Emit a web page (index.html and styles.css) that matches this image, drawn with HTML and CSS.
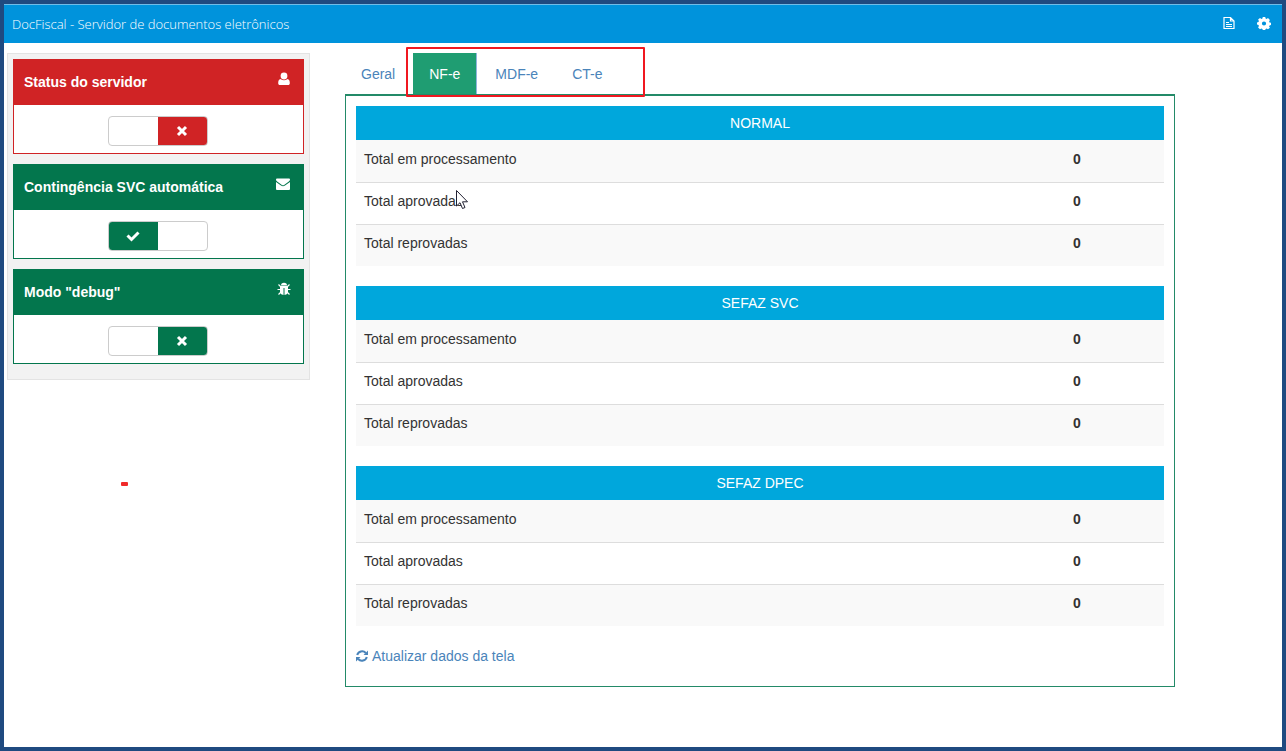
FILE: index.html
```html
<!DOCTYPE html>
<html lang="pt-BR">
<head>
<meta charset="utf-8">
<meta name="viewport" content="width=device-width, initial-scale=1">
<title>DocFiscal</title>
<link rel="stylesheet" href="styles.css">
</head>
<body>
<div class="window">
  <header class="topbar">
    <h1 class="brand">DocFiscal - Servidor de documentos eletrônicos</h1>
    <div class="actions">
      <button class="icon-button" type="button" aria-label="Documentos">
        <svg width="12" height="14" viewBox="0 0 12 14" fill="none" stroke="currentColor" stroke-width="1.200"><path d="M1 1.500h6.500l3.500 3.500v7.500H1zM7.500 1.500v3.500h3.500M3 6.500h3M3 8.500h6M3 10.500h6"/></svg>
      </button>
      <button class="icon-button" type="button" aria-label="Configurações">
        <svg width="14" height="14" viewBox="0 0 14 14"><path fill="currentColor" fill-rule="evenodd" d="M5.800 1h2.400l.4 1.500 1 .4L11 2.100l1.900 1.900-.8 1.400.4 1 1.500.4v2.200l-1.500.4-.4 1 .8 1.400L11 13.300l-1.400-.8-1 .4-.4 1.100H5.800l-.4-1.100-1-.4-1.400.8-1.900-1.900.8-1.400-.4-1L0 8.600V6.400L1.500 6l.4-1-.8-1.400L3 2.100l1.400.8 1-.4zM7 5.400a2.100 2.100 0 1 0 0 4.200 2.100 2.100 0 0 0 0-4.200z"/></svg>
      </button>
    </div>
  </header>

  <div class="layout">
    <aside class="sidebar">
      <section class="card card-danger">
        <div class="card-head">
          <h2 class="card-title" id="t1">Status do servidor</h2>
          <svg width="14" height="14" viewBox="0 0 14 14" fill="currentColor"><circle cx="7" cy="4" r="3.400"/><path d="M3.500 7q3.500 2.500 7 0c1.600.4 2.300 1.800 2.300 4 0 1.400-.6 2-1.800 2H3c-1.200 0-1.800-.6-1.800-2 0-2.200.7-3.600 2.300-4z"/></svg>
        </div>
        <div class="card-body">
          <span class="switch"><input type="checkbox" class="switch-input" aria-labelledby="t1"><svg class="mark mark-off" width="12" height="12" viewBox="0 0 12 12"><path d="M2 2l8 8M10 2l-8 8"/></svg></span>
        </div>
      </section>
      <section class="card card-ok">
        <div class="card-head">
          <h2 class="card-title" id="t2">Contingência SVC automática</h2>
          <svg width="16" height="14" viewBox="0 0 16 14" fill="currentColor"><path d="M2 1.500h12q1 0 1 1c0 1-.7 1.700-1.500 2.300L9.400 7.700Q8 8.700 6.600 7.700L2.500 4.800C1.700 4.200 1 3.500 1 2.500q0-1 1-1zM1 5l5 3.600q2 1.500 4 0L15 5v7q0 1-1 1H2q-1 0-1-1z"/></svg>
        </div>
        <div class="card-body">
          <span class="switch"><input type="checkbox" class="switch-input" aria-labelledby="t2" checked><svg class="mark mark-on" width="14" height="12" viewBox="0 0 14 12"><path d="M1.500 5.500l4 4 7-7"/></svg></span>
        </div>
      </section>
      <section class="card card-ok">
        <div class="card-head">
          <h2 class="card-title" id="t3">Modo "debug"</h2>
          <svg width="14" height="14" viewBox="0 0 14 14"><path fill="currentColor" d="M4 3.500a3 2.800 0 0 1 6 0zM3 4h8v5.500q0 3-3.500 3.500V6h-1v7Q3 12.500 3 9.500z"/><path stroke="currentColor" stroke-width="1.200" fill="none" d="M1.500 2.500l2.500 2.500M12.500 2.500L10 5M.500 7.500H4M10 7.500h3.500M1.500 12.500L4 10M12.500 12.500L10 10"/></svg>
        </div>
        <div class="card-body">
          <span class="switch"><input type="checkbox" class="switch-input" aria-labelledby="t3"><svg class="mark mark-off" width="12" height="12" viewBox="0 0 12 12"><path d="M2 2l8 8M10 2l-8 8"/></svg></span>
        </div>
      </section>
    </aside>

    <main class="content">
      <nav class="tabs">
        <a class="tab" href="#geral">Geral</a>
        <a class="tab tab-active" href="#nfe">NF-e</a>
        <a class="tab" href="#mdfe">MDF-e</a>
        <a class="tab" href="#cte">CT-e</a>
        <span class="highlight"></span>
      </nav>
      <div class="panel">
        <table class="totals">
          <thead><tr><th colspan="2">NORMAL</th></tr></thead>
          <tbody>
            <tr><td>Total em processamento</td><td class="value">0</td></tr>
            <tr><td><span class="pointed">Total aprovadas<svg class="cursor" width="14" height="21" viewBox="0 0 14 21"><path d="M1.500 1.500v15.500l3.500-3.300 2.500 5.800 2.500-1-2.500-5.700h5z" fill="#fff" stroke="#223"/></svg></span></td><td class="value">0</td></tr>
            <tr><td>Total reprovadas</td><td class="value">0</td></tr>
          </tbody>
        </table>
        <table class="totals">
          <thead><tr><th colspan="2">SEFAZ SVC</th></tr></thead>
          <tbody>
            <tr><td>Total em processamento</td><td class="value">0</td></tr>
            <tr><td>Total aprovadas</td><td class="value">0</td></tr>
            <tr><td>Total reprovadas</td><td class="value">0</td></tr>
          </tbody>
        </table>
        <table class="totals">
          <thead><tr><th colspan="2">SEFAZ DPEC</th></tr></thead>
          <tbody>
            <tr><td>Total em processamento</td><td class="value">0</td></tr>
            <tr><td>Total aprovadas</td><td class="value">0</td></tr>
            <tr><td>Total reprovadas</td><td class="value">0</td></tr>
          </tbody>
        </table>
        <a class="refresh" href="#atualizar">
          <svg width="12" height="12" viewBox="0 0 12 12"><path d="M1.200 5A5 5 0 0 1 9.800 3M10.800 7A5 5 0 0 1 2.200 9" fill="none" stroke="currentColor" stroke-width="2"/><path fill="currentColor" d="M12 .5V5H7.500zM0 11.500V7h4.500z"/></svg>
          Atualizar dados da tela
        </a>
      </div>
    </main>
  </div>
  <span class="dash"></span>
</div>
</body>
</html>
```
FILE: styles.css
```css
* { box-sizing: border-box; }

body {
  margin: 0;
  font: 14px/20px "Liberation Sans", Arial, sans-serif;
  color: #333;
  background: #fff;
}

.window {
  position: relative;
  min-height: 100vh;
  border: 4px solid #1f4a80;
}

.topbar {
  display: flex;
  align-items: center;
  justify-content: space-between;
  height: 39px;
  padding: 0 11px 3px 8px;
  border-top: 1px solid #6fbce8;
  background: #0093dc;
  color: #fff;
}

.brand {
  margin: 0;
  padding-top: 3px;
  font: 300 13px/20px "Open Sans", sans-serif;
}

.actions { display: flex; gap: 22px; }

.icon-button {
  display: flex;
  padding: 0;
  border: 0;
  background: none;
  color: #fff;
}

.layout {
  display: grid;
  grid-template-columns: 303px minmax(0, 1fr);
  gap: 35px;
  align-items: start;
  padding: 10px 107px 0 3px;
}

.sidebar {
  display: grid;
  gap: 10px;
  padding: 5px 5px 15px;
  border: 1px solid #e3e3e3;
  background: #f2f2f2;
}

.card { border: 1px solid var(--tone); background: #fff; }
.card-danger { --tone: #d02325; }
.card-ok { --tone: #03764d; }

.card-head {
  display: flex;
  justify-content: space-between;
  padding: 12px 12px 13px 10px;
  background: var(--tone);
  color: #fff;
}

.card-title { margin: 0; font-size: 14px; line-height: 20px; }

.card-body {
  display: flex;
  justify-content: center;
  padding: 11px 2px 7px 0;
}

.switch {
  position: relative;
  display: flex;
}

.switch-input {
  appearance: none;
  width: 100px;
  height: 30px;
  margin: 0;
  border: 1px solid #ccc;
  border-radius: 4px;
  background: linear-gradient(90deg, #fff 50%, var(--tone) 50%);
}

.switch-input:checked {
  background: linear-gradient(90deg, var(--tone) 50%, #fff 50%);
}

.mark {
  position: absolute;
  top: 9px;
  fill: none;
  stroke: #fff;
  stroke-width: 3;
  pointer-events: none;
}

.mark-off { right: 20px; }
.mark-on { left: 18px; }

.tabs {
  position: relative;
  display: flex;
  gap: 2px;
}

.tab {
  padding: 11px 16px 10px;
  color: #4a84ba;
  text-decoration: none;
}

.tab-active {
  border-right: 1px solid #8fb4dc;
  background: #1f9d72;
  color: #fff;
}

.highlight {
  position: absolute;
  top: -6px;
  left: 61px;
  width: 239px;
  height: 50px;
  border: 2px solid #f01820;
  border-radius: 1px;
  pointer-events: none;
}

.panel {
  padding: 10px 10px 19px;
  border: 1px solid #238a68;
  border-top-width: 2px;
}

.totals {
  width: 100%;
  margin-bottom: 20px;
  border-spacing: 0;
  table-layout: fixed;
}

.totals th {
  height: 34px;
  padding: 7px 8px;
  background: #00a7dc;
  color: #fff;
  font-weight: 400;
}

.totals td {
  height: 42px;
  padding: 8px;
  border-top: 1px solid #ddd;
  line-height: 20px;
  vertical-align: top;
}

.totals tbody tr:first-child td { border-top-color: #f9f9f9; }
.totals tbody tr:nth-child(odd) { background: #f9f9f9; }

.totals .value {
  padding-left: 313px;
  font-weight: 700;
}

.pointed { position: relative; }

.cursor {
  position: absolute;
  top: -4px;
  right: -6px;
}

.refresh {
  display: inline-flex;
  align-items: center;
  gap: 4px;
  color: #4a84ba;
  text-decoration: none;
}

.dash {
  position: absolute;
  top: 478px;
  left: 117px;
  width: 7px;
  height: 4px;
  border-radius: 1px;
  background: #f02a2a;
}
```
